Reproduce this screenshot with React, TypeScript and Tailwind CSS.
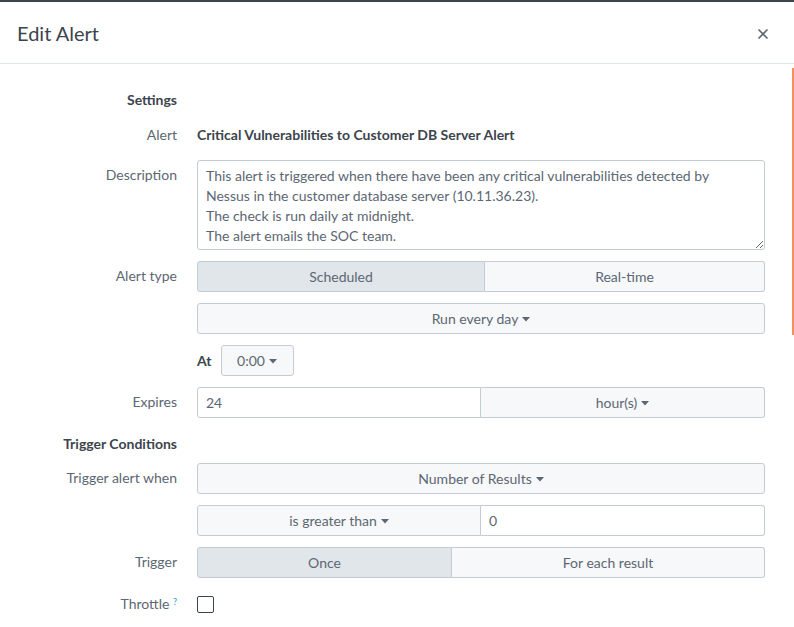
import React from "react";

const Caret = () => (
  <svg className="ml-1 inline-block h-2 w-2" viewBox="0 0 8 8" fill="currentColor">
    <path d="M0 2h8L4 6.5z" />
  </svg>
);

const Label = ({ children, className = "" }: { children: React.ReactNode; className?: string }) => (
  <div className={`w-[177px] shrink-0 text-right text-[#5c6773] ${className}`}>{children}</div>
);

const Row = ({ label, children, className = "", labelClass = "pt-[5px]" }: { label?: React.ReactNode; children: React.ReactNode; className?: string; labelClass?: string }) => (
  <div className={`flex gap-5 ${className}`}>
    <Label className={labelClass}>{label}</Label>
    <div className="w-[568px]">{children}</div>
  </div>
);

const base = "flex h-[31px] items-center justify-center border border-[#c3cbd4] text-[#5c6773]";
const btn = `${base} bg-[#f7f8fa]`;
const active = `${base} bg-[#e1e6eb]`;

export default function App() {
  return (
    <div className="h-[627px] w-[794px] overflow-hidden bg-white text-[14px] leading-[20px] text-[#3c444d]" style={{ fontFamily: "Lato, 'Open Sans', sans-serif" }}>
      <div className="h-[2px] bg-[#3c444d]" />
      <div className="flex h-[62px] items-center justify-between border-b border-[#e1e6eb] pl-[17px] pr-[25px]">
        <h1 className="text-[20px] font-normal text-[#3c444d]">Edit Alert</h1>
        <svg className="mt-[2px] h-3 w-3 text-[#5c6773]" viewBox="0 0 12 12" stroke="currentColor" strokeWidth="1.6">
          <path d="M1.5 1.5l9 9M10.5 1.5l-9 9" />
        </svg>
      </div>
      <div className="flex">
        <div className="flex-1 pt-[26px]">
          <Row label={<span className="font-bold text-[#3c444d]">Settings</span>} labelClass="pt-0">
            <div />
          </Row>
          <Row label="Alert" className="mt-[15px]" labelClass="pt-0">
            <div className="font-bold">Critical Vulnerabilities to Customer DB Server Alert</div>
          </Row>
          <Row label="Description" className="mt-[15px]">
            <textarea
              readOnly
              className="block h-[90px] w-full resize-y rounded-[3px] border border-[#c3cbd4] px-[8px] py-[5px] leading-[20px] text-[#5c6773]"
              value={"This alert is triggered when there have been any critical vulnerabilities detected by Nessus in the customer database server (10.11.36.23).\nThe check is run daily at midnight.\nThe alert emails the SOC team."}
            />
          </Row>
          <Row label="Alert type" className="mt-[11px]">
            <div className="flex">
              <div className={`${active} w-[288px] rounded-l-[3px]`}>Scheduled</div>
              <div className={`${btn} flex-1 rounded-r-[3px] border-l-0`}>Real-time</div>
            </div>
          </Row>
          <Row className="mt-[11px]">
            <div className={`${btn} rounded-[3px]`}>
              Run every day <Caret />
            </div>
          </Row>
          <Row className="mt-[11px]">
            <div className="flex items-center gap-[9px]">
              <span className="font-bold">At</span>
              <div className={`${btn} w-[73px] rounded-[3px]`}>
                0:00 <Caret />
              </div>
            </div>
          </Row>
          <Row label="Expires" className="mt-[11px]">
            <div className="flex">
              <div className="flex h-[31px] w-[284px] items-center rounded-l-[3px] border border-[#c3cbd4] px-[8px] text-[#5c6773]">24</div>
              <div className={`${btn} flex-1 rounded-r-[3px] border-l-0`}>
                hour(s) <Caret />
              </div>
            </div>
          </Row>
          <Row label={<span className="font-bold text-[#3c444d]">Trigger Conditions</span>} className="mt-[16px]" labelClass="pt-0">
            <div />
          </Row>
          <Row label="Trigger alert when" className="mt-[9px]">
            <div className={`${btn} rounded-[3px]`}>
              Number of Results <Caret />
            </div>
          </Row>
          <Row className="mt-[11px]">
            <div className="flex">
              <div className={`${btn} w-[284px] rounded-l-[3px]`}>
                is greater than <Caret />
              </div>
              <div className="flex h-[31px] flex-1 items-center rounded-r-[3px] border border-l-0 border-[#c3cbd4] px-[8px] text-[#5c6773]">0</div>
            </div>
          </Row>
          <Row label="Trigger" className="mt-[11px]">
            <div className="flex">
              <div className={`${active} w-[255px] rounded-l-[3px]`}>Once</div>
              <div className={`${btn} flex-1 rounded-r-[3px] border-l-0`}>For each result</div>
            </div>
          </Row>
          <Row
            label={
              <span>
                Throttle <sup className="text-[9px] text-[#1a9cd9]">?</sup>
              </span>
            }
            className="mt-[16px] items-center"
            labelClass="pt-0"
          >
            <div className="h-[17px] w-[17px] rounded-[2px] border-[1.5px] border-[#3c444d]" />
          </Row>
        </div>
        <div className="mt-[4px] h-[267px] w-[2px] bg-[#f58f5f]" />
      </div>
    </div>
  );
}
